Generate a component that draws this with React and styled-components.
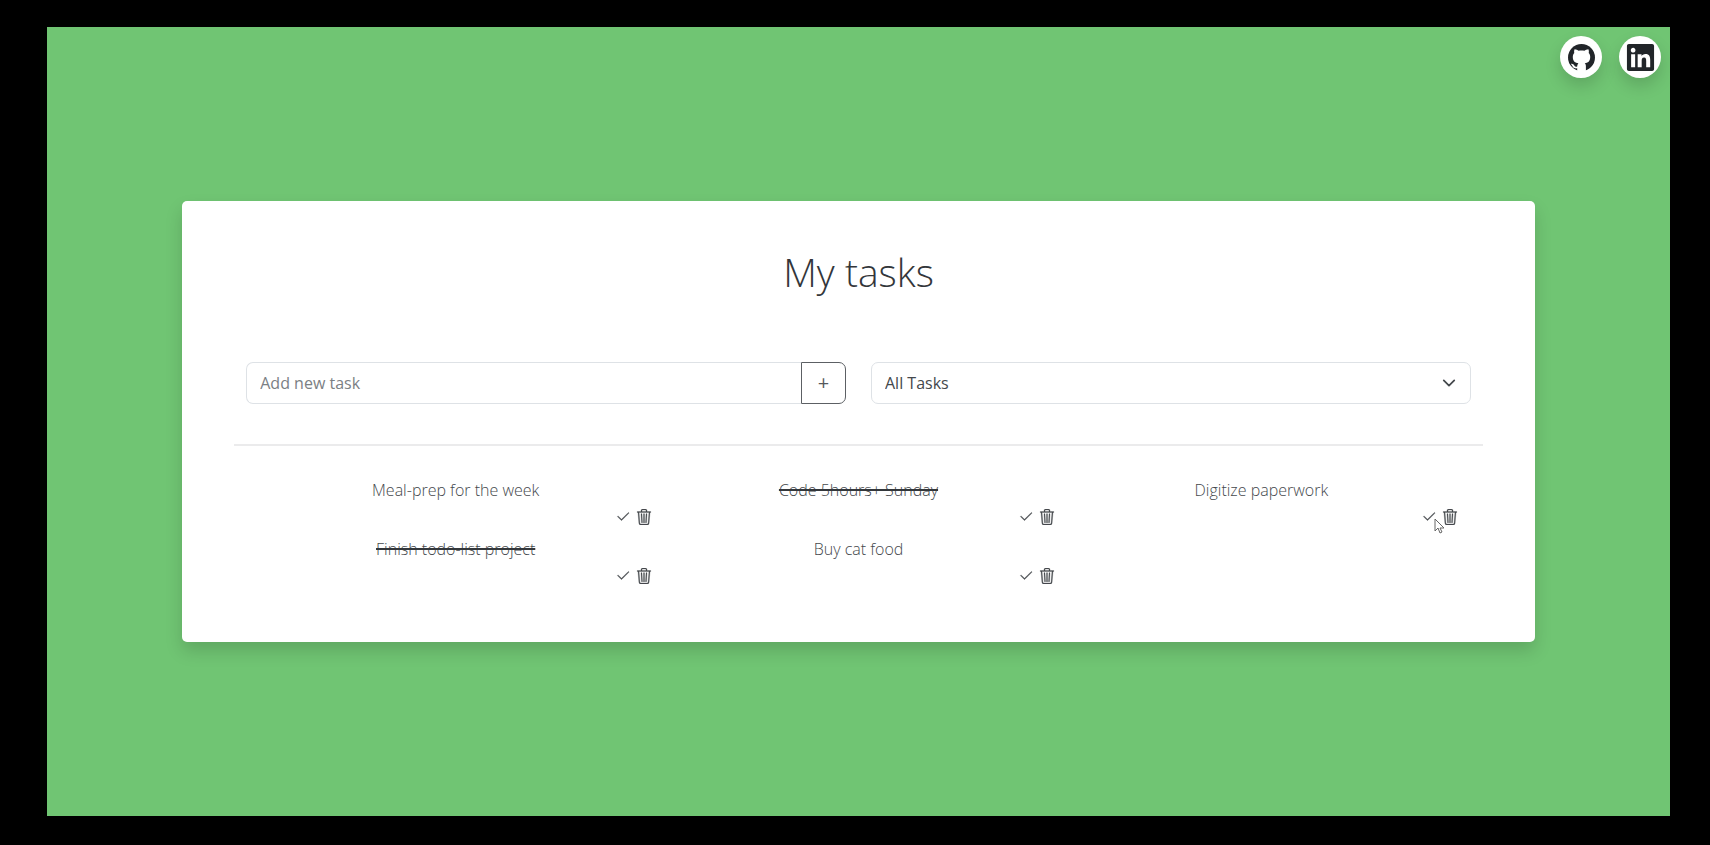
import React, { useState } from "react";
import styled, { createGlobalStyle } from "styled-components";
import { BsCheck2, BsTrash3 } from "react-icons/bs";
import { FaLinkedin } from "react-icons/fa";

const GlobalStyle = createGlobalStyle`
  *, *::before, *::after { box-sizing: border-box; }
  body {
    margin: 0;
    background: #000;
    color: #212529;
    font-family: "Open Sans", "Noto Sans", sans-serif;
    font-size: 16px;
    line-height: 26px;
  }
`;

const Frame = styled.div`
  display: flex;
  min-height: 100vh;
  padding: 27px 40px 29px 47px;
`;

const Stage = styled.div`
  flex: 1;
  display: grid;
  grid-template-rows: 1fr auto 1fr;
  background: #70c573;
`;

const Socials = styled.nav`
  display: flex;
  justify-content: flex-end;
  align-items: flex-start;
  gap: 17px;
  padding: 9px;
`;

const SocialLink = styled.a`
  display: grid;
  place-items: center;
  width: 42px;
  height: 42px;
  border-radius: 50%;
  background: #fff;
  color: #212529;
  font-size: ${(p) => p.$iconSize}px;
  box-shadow: 0 8px 16px rgba(0, 0, 0, 0.15);
`;

const Card = styled.main`
  width: calc(100% * 10 / 12);
  margin: 0 auto;
  padding: 45px 52px 52px;
  border-radius: 5px;
  background: #fff;
  box-shadow: 0 9px 17px rgba(0, 0, 0, 0.15);
`;

const Title = styled.h1`
  margin: 0 0 64px;
  color: #33363a;
  font-size: 39px;
  font-weight: 300;
  line-height: 52px;
  text-align: center;
`;

const Controls = styled.form`
  display: grid;
  grid-template-columns: 1fr 1fr;
  gap: 25px;
  padding: 0 12px 40px;
  border-bottom: 2px solid #ebebec;
`;

const InputGroup = styled.div`
  display: flex;
  height: 42px;
`;

const TaskInput = styled.input`
  flex: 1;
  min-width: 0;
  padding: 0 13px;
  border: 1px solid #dee2e6;
  border-right: 0;
  border-radius: 7px 0 0 7px;
  color: inherit;
  font: inherit;
  &::placeholder { color: #7b8084; opacity: 1; }
`;

const AddButton = styled.button`
  width: 45px;
  padding: 0;
  border: 1px solid #5c6064;
  border-radius: 0 7px 7px 0;
  background: #fff;
  color: #55585c;
  font: inherit;
  font-size: 20px;
  cursor: pointer;
`;

const SelectWrap = styled.div`
  display: grid;
  align-items: center;
  height: 42px;
  & > * { grid-area: 1 / 1; }
`;

const Select = styled.select`
  width: 100%;
  height: 100%;
  padding: 0 13px;
  border: 1px solid #dee2e6;
  border-radius: 7px;
  appearance: none;
  background: #fff;
  color: #44484c;
  font: inherit;
`;

const Chevron = styled.svg`
  justify-self: end;
  width: 14px;
  height: 14px;
  margin-right: 15px;
  pointer-events: none;
`;

const TaskList = styled.ul`
  display: grid;
  grid-template-columns: repeat(3, 1fr);
  row-gap: 5px;
  margin: 0;
  padding: 31px 20px 0;
  list-style: none;
`;

const Task = styled.li`
  display: flex;
  flex-direction: column;
  font-weight: 300;
  text-align: center;
`;

const TaskName = styled.span`
  align-self: center;
  color: #44484c;
  text-decoration: ${(p) => (p.$done ? "line-through 2px #33373b" : "none")};
`;

const Actions = styled.div`
  position: relative;
  display: flex;
  justify-content: flex-end;
  align-items: center;
  gap: 5px;
  height: 28px;
  padding-right: 5px;
`;

const IconButton = styled.button`
  display: flex;
  padding: 0;
  border: 0;
  background: none;
  color: #44484c;
  font-size: 16px;
  cursor: pointer;

  path {
    stroke: currentColor;
    stroke-width: 0.3;
  }
`;

const Pointer = styled.svg`
  position: absolute;
  right: 18px;
  top: 15px;
  width: 11px;
  height: 17px;
  pointer-events: none;
`;

const GithubMark = () => (
  <svg width="1em" height="1em" viewBox="0 0 27 27" aria-hidden="true">
    <circle cx="13.5" cy="13.5" r="13.5" fill="currentColor" />
    <path
      d="M6.6 5.2c1.7.1 3 .9 4 1.6 1.9-.5 3.9-.5 5.8 0 1-.7 2.3-1.5 4-1.6.6 1.4.6 2.7.3 3.8 1 1.1 1.5 2.4 1.5 4 0 4.400-2.300 5.900-5.500 6.300.9.8 1.200 1.700 1.200 3V27H9.200v-2.700c-2.900.4-4.100-.7-4.800-2.200-.5-1-1-1.600-1.600-2.100 1.700-.5 2.800.5 3.500 1.500.7 1.100 1.500 1.400 2.900 1 .1-1.300.4-2.300 1.200-3.200-3.200-.4-5.600-1.900-5.600-6.300 0-1.600.5-2.900 1.500-4-.3-1.100-.3-2.400.3-3.800z"
      fill="#fff"
    />
  </svg>
);

const initialTasks = [
  { name: "Meal-prep for the week", done: false },
  { name: "Code 5hours+ Sunday", done: true },
  { name: "Digitize paperwork", done: false, pointed: true },
  { name: "Finish todo-list project", done: true },
  { name: "Buy cat food", done: false },
];

export default function App() {
  const [tasks, setTasks] = useState(initialTasks);
  const [draft, setDraft] = useState("");
  const [filter, setFilter] = useState("all");

  const addTask = (e) => {
    e.preventDefault();
    if (!draft.trim()) return;
    setTasks([...tasks, { name: draft.trim(), done: false }]);
    setDraft("");
  };
  const toggle = (task) =>
    setTasks(tasks.map((t) => (t === task ? { ...t, done: !t.done } : t)));
  const remove = (task) => setTasks(tasks.filter((t) => t !== task));
  const shown = tasks.filter(
    (t) => filter === "all" || t.done === (filter === "done")
  );

  return (
    <Frame>
      <GlobalStyle />
      <Stage>
        <Socials>
          <SocialLink href="#github" aria-label="GitHub" $iconSize={27}><GithubMark /></SocialLink>
          <SocialLink href="#linkedin" aria-label="LinkedIn" $iconSize={31}><FaLinkedin /></SocialLink>
        </Socials>
        <Card>
          <Title>My tasks</Title>
          <Controls onSubmit={addTask}>
            <InputGroup>
              <TaskInput
                aria-label="Add new task"
                placeholder="Add new task"
                value={draft}
                onChange={(e) => setDraft(e.target.value)}
              />
              <AddButton type="submit" aria-label="Add">+</AddButton>
            </InputGroup>
            <SelectWrap>
              <Select
                aria-label="Filter tasks"
                value={filter}
                onChange={(e) => setFilter(e.target.value)}
              >
                <option value="all">All Tasks</option>
                <option value="done">Completed</option>
                <option value="open">Pending</option>
              </Select>
              <Chevron viewBox="0 0 16 16" fill="none" stroke="#44484c" strokeWidth="2" strokeLinecap="round" strokeLinejoin="round" aria-hidden="true">
                <path d="m2 5 6 6 6-6" />
              </Chevron>
            </SelectWrap>
          </Controls>
          <TaskList>
            {shown.map((task) => (
              <Task key={task.name}>
                <TaskName $done={task.done}>{task.name}</TaskName>
                <Actions>
                  <IconButton aria-label="Toggle done" onClick={() => toggle(task)}><BsCheck2 /></IconButton>
                  <IconButton aria-label="Delete" onClick={() => remove(task)}><BsTrash3 /></IconButton>
                  {task.pointed && (
                    <Pointer viewBox="0 0 11 17" aria-hidden="true">
                      <path d="M1 1v12l3-3 2 5 2-1-2-4h4z" fill="#fff" stroke="#666" strokeWidth="1" strokeLinejoin="round" />
                    </Pointer>
                  )}
                </Actions>
              </Task>
            ))}
          </TaskList>
        </Card>
      </Stage>
    </Frame>
  );
}
